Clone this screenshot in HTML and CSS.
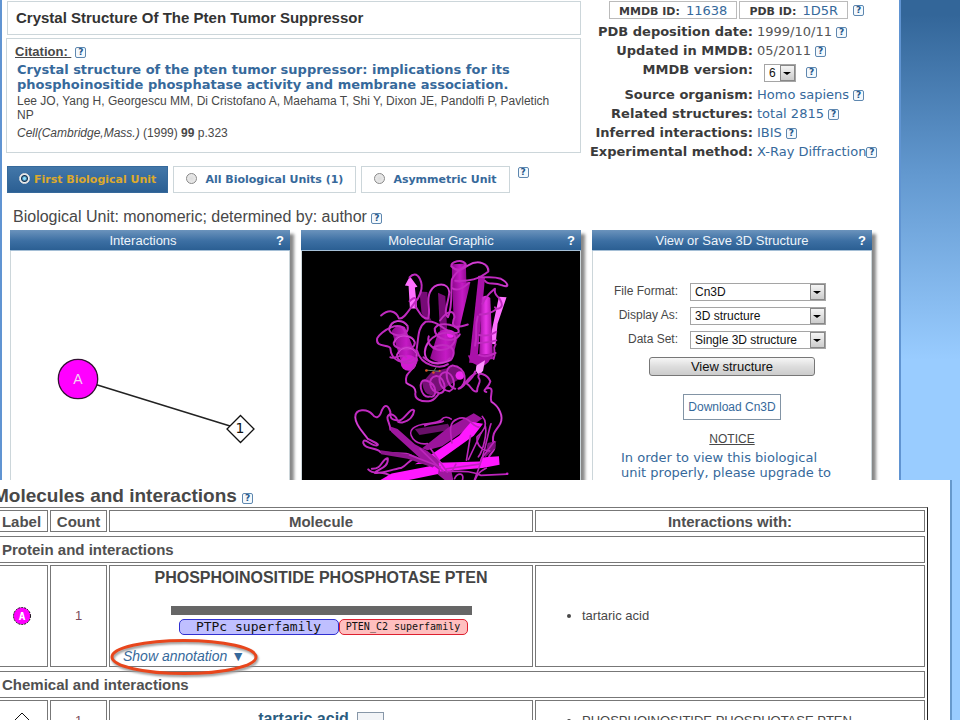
FILE: index.html
```html
<!DOCTYPE html>
<html lang="en">
<head>
<meta charset="utf-8">
<title>Crystal Structure Of The Pten Tumor Suppressor</title>
<link rel="stylesheet" href="styles.css">
</head>
<body>
<main class="summary">
  <div class="top">
    <div class="lead">
      <h1 class="title">Crystal Structure Of The Pten Tumor Suppressor</h1>
      <section class="citation">
        <div class="citation-head"><h2>Citation:&nbsp;</h2><a class="help" href="#">?</a></div>
        <a class="paper" href="#">Crystal structure of the pten tumor suppressor: implications for its<br>phosphoinositide phosphatase activity and membrane association.</a>
        <p>Lee JO, Yang H, Georgescu MM, Di Cristofano A, Maehama T, Shi Y, Dixon JE, Pandolfi P, Pavletich NP</p>
        <p class="journal"><i>Cell(Cambridge,Mass.)</i> (1999) <b>99</b> p.323</p>
      </section>
      <div class="units">
        <label class="unit on"><input type="radio" name="unit" checked>First Biological Unit</label>
        <label class="unit"><input type="radio" name="unit">All Biological Units (1)</label>
        <label class="unit"><input type="radio" name="unit">Asymmetric Unit</label>
        <a class="help" href="#">?</a>
      </div>
    </div>
    <div class="facts">
      <div class="ids">
        <span class="id"><b>MMDB ID:</b> <a href="#">11638</a></span>
        <span class="id"><b>PDB ID:</b> <a href="#">1D5R</a></span>
        <a class="help" href="#">?</a>
      </div>
      <dl>
        <dt>PDB deposition date:</dt><dd>1999/10/11 <a class="help" href="#">?</a></dd>
        <dt>Updated in MMDB:</dt><dd>05/2011 <a class="help" href="#">?</a></dd>
        <dt class="tall"><label for="version">MMDB version:</label></dt>
        <dd class="tall version"><span class="pick"><select id="version"><option>6</option></select></span><a class="help" href="#">?</a></dd>
        <dt>Source organism:</dt><dd><a href="#">Homo sapiens</a> <a class="help" href="#">?</a></dd>
        <dt>Related structures:</dt><dd><a href="#">total 2815</a> <a class="help" href="#">?</a></dd>
        <dt>Inferred interactions:</dt><dd><a href="#">IBIS</a> <a class="help" href="#">?</a></dd>
        <dt>Experimental method:</dt><dd><a href="#">X-Ray Diffraction</a><a class="help" href="#">?</a></dd>
      </dl>
    </div>
  </div>
  <p class="unit-note">Biological Unit: monomeric; determined by: author <a class="help" href="#">?</a></p>
  <div class="panels">
    <section class="panel graph">
      <h3>Interactions<a href="#">?</a></h3>
      <svg viewBox="0 0 278 231" role="img" aria-label="Interaction graph">
        <line x1="67" y1="128" x2="219" y2="175" stroke="#222" stroke-width="1.5"/>
        <circle cx="67" cy="128" r="19.7" fill="#f0f" stroke="#313" stroke-width="1.3"/>
        <text x="67" y="133" class="node-a">A</text>
        <path d="M229.500 164.500L243 178L229.500 191.500L216 178Z" fill="#fff" stroke="#111" stroke-width="1.3"/>
        <text x="229" y="182" class="node-1">1</text>
      </svg>
    </section>
    <section class="panel dark">
      <h3>Molecular Graphic<a href="#">?</a></h3>
      <svg viewBox="3 72 840 693" role="img" aria-label="Protein structure" fill="none" stroke-linecap="round" stroke-linejoin="round">
        <defs>
          <linearGradient id="rod"><stop offset="0" stop-color="#8d0a8d"/><stop offset=".55" stop-color="#c51ac5"/><stop offset="1" stop-color="#900b90"/></linearGradient>
          <linearGradient id="rod2"><stop offset="0" stop-color="#a010a0"/><stop offset=".5" stop-color="#e935e9"/><stop offset="1" stop-color="#a010a0"/></linearGradient>
        </defs>
        <!-- strands and rods of the upper domain -->
        <path d="M358 194L382 196L384 262L394 282L374 280L364 258Z" fill="#760b76"/>
        <path d="M414 198L436 208L442 318L420 318Z" fill="#760b76"/>
        <path d="M329 148L314 176L325 178L329 246L351 246L344 182L352 180Z" fill="#ff70ff"/>
        <path d="M456 112L498 110L500 178L456 180Z" fill="url(#rod)"/>
        <path d="M457 170L512 166L478 310L462 304Z" fill="url(#rod)"/>
        <path d="M536 150L556 152L532 410L508 410Z" fill="#a911a9"/>
        <path d="M598 210L621 212L594 292L588 354L568 352Z" fill="#ff70ff"/>
        <path d="M546 212Q558 202 572 214L580 398L538 404Z" fill="url(#rod2)"/>
        <path d="M274 314Q292 288 314 302L354 402Q342 440 308 425Z" fill="url(#rod)"/>
        <path d="M414 318Q440 296 476 324L460 388Q430 424 390 396Z" fill="url(#rod)"/>
        <circle cx="452" cy="323" r="11" fill="#f225f2"/>
        <circle cx="325" cy="410" r="24" fill="#d31bd3"/>
        <path d="M504 388L582 382L566 408L546 424L514 408Z" fill="#a911a9"/>
        <path d="M530 418L556 402L550 434L538 448L528 434Z" fill="#ff90ff"/>
        <path d="M366 470L394 438L472 418Q498 436 486 454L400 506Q372 514 366 470Z" fill="#761076"/>
        <circle cx="480" cy="448" r="13" fill="#ef27ef"/>
        <!-- helices and loops of the upper domain -->
        <g stroke="#c02ac0" stroke-width="6">
          <path d="M242 267C264 248 286 250 296 276C310 280 326 250 342 230C358 214 372 182 360 158C350 136 336 142 328 152"/>
          <path d="M328 224C348 204 350 216 346 240C360 260 366 278 384 276C394 248 376 224 390 196C404 166 446 166 448 196C446 228 428 260 444 272C460 240 452 176 456 158C466 134 496 120 498 112C486 94 454 104 454 118C474 138 488 126 504 116C536 96 568 110 566 134C536 158 510 164 466 162"/>
          <path d="M538 150C566 154 578 148 604 156C624 166 634 186 608 176C580 164 566 178 556 162"/>
          <path d="M548 232C560 206 574 196 586 186C582 208 596 206 602 220C616 244 594 252 586 242"/>
          <path d="M420 282C444 250 462 250 464 272C450 304 466 306 504 294"/>
          <path d="M314 316C304 276 240 314 230 336C224 366 266 352 270 366C272 402 306 420 340 394"/>
          <path d="M266 310C272 276 308 278 322 298C330 334 274 334 266 310M280 350C294 312 340 328 344 348C344 380 280 372 280 350M290 386C308 344 354 368 350 388C346 424 290 414 290 386"/>
          <path d="M348 376C356 340 350 304 376 286C420 278 440 330 476 318C484 298 420 280 404 306C402 344 466 352 480 324M386 330C374 370 440 390 464 346C478 306 408 314 386 346C354 390 390 432 452 402C480 366 440 346 402 362M350 372C364 424 424 428 444 414"/>
          <path d="M540 264Q570 264 590 248M538 326Q566 332 590 316M536 350Q570 348 590 342M538 386Q560 396 588 380"/>
          <path d="M456 184C478 198 496 176 508 168M534 270C522 310 536 314 526 358M588 354C576 370 592 374 582 398"/>
        </g>
        <g transform="translate(0 390)">
          <g stroke="#c02ac0" stroke-width="6">
            <path d="M270 3C280 12 304 -12 318 4M370 3C390 22 424 30 450 6"/>
            <path d="M350 8C338 54 312 44 318 80C332 92 344 88 346 108C340 130 364 138 386 136C404 134 408 122 416 114"/>
            <path d="M388 122C362 130 348 64 380 74C412 84 412 126 392 122M418 112C386 106 380 64 408 60C432 58 446 108 420 112M448 106C420 104 404 54 436 48C460 48 474 96 448 106M466 98C442 96 426 36 458 28C500 32 506 84 476 98C500 92 496 66 528 52"/>
            <path d="M526 46C522 60 516 66 500 82C516 90 518 112 532 106C532 82 548 78 536 64C532 44 564 54 572 76C566 98 544 104 560 108M558 98C592 88 566 122 576 138C596 150 614 180 602 204C590 224 578 230 580 258C594 282 574 290 568 304"/>
            <path d="M270 222C270 200 250 184 270 174C302 184 280 202 306 200C330 196 340 178 342 164C332 152 314 190 298 194C272 194 268 186 270 168C262 144 252 146 244 164C236 190 224 188 216 176C200 158 164 158 164 184C164 208 188 230 202 250C220 260 242 266 228 270C210 270 188 242 188 262C194 284 230 274 240 290C276 296 328 288 334 302"/>
            <path d="M214 340C246 342 244 308 262 308C266 334 238 340 222 352C236 358 274 342 302 338C324 328 330 306 350 308M203 342C220 362 246 342 268 360"/>
          </g>
          <!-- sheets of the lower domain -->
          <path d="M344 220L444 204L454 222L358 238Z" fill="#681068"/>
          <path d="M444 216L522 172L548 188L426 272L382 284L366 278Z" fill="#9b149b"/>
          <path d="M514 198L550 204L522 240L408 322L344 326L380 306L478 240Z" fill="#ff18ff"/>
          <path d="M270 212L292 220L344 266L382 286L454 344L460 374L434 374L410 354L340 290L272 228Z" fill="#9e179e"/>
          <path d="M240 374L274 354L400 330L416 342L414 356L326 374Z" fill="#ff18ff"/>
          <path d="M416 322L540 318L544 306L598 302L600 328L548 338L420 348Z" fill="#ff18ff"/>
          <path d="M240 284L336 298L406 328L398 336L322 310L242 296Z" fill="#8c168c"/>
          <path d="M564 262L590 256L586 278L554 308Z" fill="#7b107b"/>
          <g stroke="#bc25bc" stroke-width="5">
            <path d="M382 264C342 270 320 234 338 218C358 198 406 208 424 192C432 180 446 184 454 190M374 210C392 200 418 204 430 196M456 262C452 232 444 200 472 190C506 174 516 214 538 214M548 182C570 206 546 232 532 244C530 270 548 286 570 286M512 240L500 314M556 208C564 230 550 286 536 304M574 204C562 238 562 280 524 374"/>
            <path d="M544 232L506 312M360 280L430 348M328 298L420 334M440 340L540 326M546 308L584 258M392 280L442 350M438 348C482 350 502 342 544 360L622 356M526 374C532 352 546 346 560 338M464 370C472 352 494 350 488 374M468 326L456 348"/>
          </g>
          <circle cx="623" cy="355" r="4" fill="#d222d2"/>
          <g stroke="#65806c" stroke-width="3"><path d="M378 42L402 44L408 34M402 44L420 46"/></g>
          <g fill="#dc5526"><circle cx="379" cy="43" r="4"/><circle cx="400" cy="49" r="4"/><circle cx="419" cy="44" r="3"/></g>
        </g>
        <!-- light along the tubes -->
        <g stroke="#ec67ec" stroke-width="1.500">
          <path d="M390 196C404 166 446 166 448 196M502 117C534 96 562 110 564 130M606 158C624 166 632 184 608 175M268 308C276 278 306 280 320 298M282 348C296 316 338 330 342 346M292 384C308 348 350 368 348 388M164 574C164 598 188 620 202 640M576 528C596 540 614 570 602 594M318 470C332 482 344 478 346 498M386 346C354 390 390 430 450 402"/>
        </g>
      </svg>
    </section>
    <section class="panel">
      <h3>View or Save 3D Structure<a href="#">?</a></h3>
      <form class="save">
        <label for="format">File Format:</label><span class="pick"><select id="format"><option>Cn3D</option></select></span>
        <label for="display">Display As:</label><span class="pick"><select id="display"><option>3D structure</option></select></span>
        <label for="dataset">Data Set:</label><span class="pick"><select id="dataset"><option>Single 3D structure</option></select></span>
        <button type="button">View structure</button>
      </form>
      <div class="extra">
        <a class="download" href="#">Download Cn3D</a>
        <u>NOTICE</u>
        <p>In order to view this biological<br>unit properly, please upgrade to</p>
      </div>
    </section>
  </div>
</main>
<section class="molecules">
  <h2>Molecules and interactions <a class="help" href="#">?</a></h2>
  <table>
    <colgroup><col class="c-label"><col class="c-count"><col class="c-molecule"><col></colgroup>
    <thead>
      <tr><th>Label</th><th>Count</th><th>Molecule</th><th>Interactions with:</th></tr>
    </thead>
    <tbody>
      <tr><th class="group" colspan="4">Protein and interactions</th></tr>
      <tr class="protein">
        <td><svg class="badge" viewBox="0 0 18 18"><circle cx="9" cy="9" r="8.500" fill="#f0f" stroke="#111" stroke-dasharray="2 1"/><text x="9" y="13">A</text></svg></td>
        <td><a href="#" class="count">1</a></td>
        <td class="molecule">
          <h3>PHOSPHOINOSITIDE PHOSPHOTASE PTEN</h3>
          <div class="track">
            <div class="domains"><span class="domain blue">PTPc superfamily</span><span class="domain red">PTEN_C2 superfamily</span></div>
          </div>
          <a class="annotation" href="#">Show annotation ▼<svg viewBox="0 0 150 40" aria-hidden="true"><ellipse cx="75" cy="19" rx="72" ry="16.500"/></svg></a>
        </td>
        <td class="partners"><ul><li>tartaric acid</li></ul></td>
      </tr>
    </tbody>
    <tbody>
      <tr><th class="group" colspan="4">Chemical and interactions</th></tr>
      <tr class="chemical">
        <td><svg class="badge" viewBox="0 0 18 18"><path d="M9 1L17 9L9 17L1 9Z" fill="#fff" stroke="#111"/></svg></td>
        <td><a href="#" class="count">1</a></td>
        <td class="molecule"><a class="ligand" href="#">tartaric acid</a><button type="button" aria-label="Show structure"></button></td>
        <td class="partners"><ul><li>PHOSPHOINOSITIDE PHOSPHOTASE PTEN</li></ul></td>
      </tr>
    </tbody>
  </table>
</section>
</body>
</html>
```
FILE: styles.css
```css
*, *::before { box-sizing: border-box; }

body {
  margin: 0;
  height: 100vh;
  overflow: hidden;
  display: grid;
  grid-template-rows: 2fr 1fr;
  background: linear-gradient(#336699 2%, #6298cf 24%, #99ccff 50%);
  color: #484848;
  font: 12px/14px "Liberation Sans", Arial, sans-serif;
}

h1, h2, h3, p, dl, dd, ul { margin: 0; padding: 0; }
a { color: #36699b; text-decoration: none; }

.help {
  display: inline-block;
  width: 11px;
  height: 11px;
  border: 1px solid #5e87af;
  border-radius: 2px;
  background: #f4f9fd;
  color: #24578a;
  font: bold 9px/9px "DejaVu Sans", sans-serif;
  text-align: center;
  vertical-align: 1px;
}

/* Structure summary */
.summary {
  min-height: 0;
  overflow: hidden;
  margin-right: 59px;
  padding: 1px 0 0 4px;
  background: #fff;
  border: solid #6094d2;
  border-width: 0 2px;
}
.top { display: flex; gap: 14px; }
.lead { flex: 0 0 575px; }

.title {
  height: 34px;
  margin-left: 1px;
  padding: 0 8px;
  border: 1px solid #ccd6da;
  color: #333;
  font-size: 15px;
  line-height: 31px;
}
.citation {
  height: 115px;
  margin-top: 3px;
  padding: 5px 18px 5px 8px;
  border: 1px solid #ccd6da;
}
.citation-head { display: flex; align-items: center; gap: 4px; }
.citation h2 {
  font-size: 13px;
  line-height: 16px;
  text-decoration: underline;
}
.paper {
  display: block;
  margin-top: 2px;
  padding-left: 2px;
  font: bold 13px/15px "DejaVu Sans", Verdana, sans-serif;
  white-space: nowrap;
}
.citation p { margin-top: 2px; padding-left: 2px; }
.citation .journal { margin-top: 4px; }

.units { display: flex; gap: 5px; margin: 13px 0 0 1px; }
.units .help { margin: 1px 0 0 3px; }
.unit {
  display: flex;
  align-items: center;
  height: 27px;
  padding: 0 12px;
  border: 1px solid #ccd6da;
  color: #36699b;
  font: bold 11px/14px "DejaVu Sans", Verdana, sans-serif;
}
.unit input {
  appearance: none;
  width: 11px;
  height: 11px;
  margin: 0 8px 3px 0;
  border: 1px solid #888;
  border-radius: 50%;
  background: radial-gradient(#ddd, #eee);
}
.unit.on {
  padding: 0 11px;
  border-color: #36699b;
  background: linear-gradient(#4377a9, #2b5f93);
  color: #dda92c;
}
.unit.on input {
  margin-right: 4px;
  border-color: #ddd;
  background: radial-gradient(#8df 0 1px, #135 3px, #eee 4px);
}

.facts { font: 13px/19px "DejaVu Sans", Verdana, sans-serif; color: #555; }
.facts b, .facts dt { color: #3b3b3b; font-weight: bold; }
.ids { display: flex; align-items: center; gap: 2px; margin-left: 14px; }
.ids .help { margin-left: 3px; }
.id {
  height: 18px;
  padding: 0 9px;
  border: 1px solid #bbb;
  line-height: 17px;
}
.id b { margin-right: 2px; font-size: 11px; }
.facts dl {
  display: grid;
  grid-template-columns: 158px auto;
  column-gap: 4px;
  margin-top: 3px;
}
.facts dt { display: flex; justify-content: flex-end; white-space: nowrap; }
.facts dd { white-space: nowrap; }
.facts .tall { height: 25px; }
.version { display: flex; align-items: center; gap: 10px; padding-left: 7px; }

.pick {
  position: relative;
  display: block;
  height: 18px;
  border: 1px solid #a5a5a5;
  background: #fff;
}
.pick select {
  appearance: none;
  display: block;
  width: 100%;
  height: 16px;
  padding: 0 18px 0 4px;
  border: 0;
  background: none;
  color: #111;
  font: 12px/16px "Liberation Sans", Arial, sans-serif;
}
.pick::before {
  content: "";
  position: absolute;
  top: 0;
  right: 0;
  width: 15px;
  height: 16px;
  border: 1px solid #888;
  background: linear-gradient(#f4f4f4, #ccc);
}
.pick::after {
  content: "";
  position: absolute;
  top: 7px;
  right: 4px;
  border: solid transparent;
  border-width: 3px 4px 0;
  border-top-color: #000;
}
.version .pick { width: 32px; }

.unit-note { margin: 14px 0 0 7px; font-size: 16px; line-height: 20px; }

.panels { display: flex; gap: 11px; margin: 3px 0 0 4px; }
.panel {
  flex: 0 0 280px;
  height: 300px;
  border: 1px solid #ccd6da;
  background: #fff;
  box-shadow: 4px 4px 3px #888;
}
.panel.dark { background: #000; }
.panel h3 {
  position: relative;
  margin: -1px -1px 0;
  height: 21px;
  border-bottom: 1px solid #a5bfd6;
  background: linear-gradient(#6b93bc, #3c6fa3 55%, #2b5f93);
  color: #eef4fa;
  font-size: 13px;
  font-weight: normal;
  line-height: 21px;
  text-align: center;
}
.panel.graph h3 { padding-right: 14px; }
.panel h3 a { position: absolute; right: 6px; color: #fff; font-weight: bold; }
.panel > svg { display: block; width: 100%; }
.node-a { fill: #f4d4f4; font: 14px "Liberation Sans", sans-serif; text-anchor: middle; }
.node-1 { fill: #111; font: 14px "DejaVu Sans", sans-serif; text-anchor: middle; }

.save {
  display: grid;
  grid-template-columns: 85px 136px;
  column-gap: 12px;
  row-gap: 6px;
  margin-top: 32px;
}
.save label { text-align: right; line-height: 17px; }
.save button {
  grid-column: 1 / -1;
  width: 166px;
  height: 19px;
  margin: 2px 0 0 56px;
  padding: 0;
  border: 1px solid #777;
  border-radius: 3px;
  background: linear-gradient(#f6f6f6, #ddd 50%, #ccc);
  color: #111;
  font: 13px/16px "Liberation Sans", Arial, sans-serif;
}
.extra { display: flex; flex-direction: column; align-items: center; margin-top: 18px; }
.download { padding: 5px 4px; border: 1px solid #8294a5; }
.extra u { margin-top: 12px; }
.extra p {
  margin-top: 4px;
  padding-right: 12px;
  color: #36699b;
  font: 13px/15px "DejaVu Sans", Verdana, sans-serif;
}

/* Molecule table */
.molecules {
  min-height: 0;
  overflow: hidden;
  margin-right: 8px;
  border-right: 2px solid #6699cc;
  background: #fff;
}
.molecules h2 {
  margin: 4px 0 0 -7px;
  font-size: 19px;
  line-height: 23px;
  white-space: nowrap;
}
table {
  width: calc(100% - 14px);
  margin-left: -8px;
  table-layout: fixed;
  border: 1px solid #777;
  border-right-color: #222;
  border-spacing: 2px;
}
tbody::before { content: ""; display: table-row; }
th, td { padding: 0; border: 1px solid #777; text-align: center; }
th { height: 22px; color: #505050; font-size: 15px; line-height: 17px; }
th.group { height: 27px; padding-left: 6px; text-align: left; }
.c-label { width: 53px; }
.c-count { width: 57px; }
.c-molecule { width: 424px; }
.protein { height: 102px; }
.chemical td { height: 42px; }
.badge { display: block; width: 18px; height: 18px; margin: 0 auto; }
.badge text { fill: #fff; font: bold 11px "DejaVu Sans Mono", monospace; text-anchor: middle; }
.count { color: #7a4a5c; font-size: 13px; }

.molecule h3 { color: #444; font-size: 16px; line-height: 20px; }
.track { width: 301px; margin: 18px auto 0; border-top: 9px solid #666; padding: 4px 4px 0 8px; }
.protein .molecule { vertical-align: top; padding-top: 2px; }
.domains { display: flex; color: #111; }
.domain {
  height: 16px;
  border: 1px solid;
  border-radius: 5px;
  font-family: "DejaVu Sans Mono", monospace;
  line-height: 13px;
  white-space: nowrap;
}
.blue { flex: 0 0 160px; border-color: #3030d0; background: #bfbfff; font-size: 13px; }
.red { flex: 0 0 129px; border-color: #dd2030; background: #ffbfbf; font-size: 10px; }
.annotation {
  position: relative;
  display: table;
  margin: 11px 0 0 11px;
  font-size: 14px;
  font-style: italic;
  line-height: 16px;
}
.annotation svg {
  position: absolute;
  left: -12px;
  top: -8px;
  width: 150px;
  height: 40px;
  fill: none;
  stroke: #e8461c;
  stroke-width: 3;
  filter: drop-shadow(1px 2px 1px #999);
}
.partners { text-align: left; font-size: 13px; }
.partners ul { padding-left: 46px; }
.ligand { font-size: 16px; font-weight: bold; color: #2a5c80; }
.chemical button { width: 27px; height: 18px; margin-left: 8px; border: 1px solid #8797a8; background: #f2f4f7; vertical-align: middle; }
```
